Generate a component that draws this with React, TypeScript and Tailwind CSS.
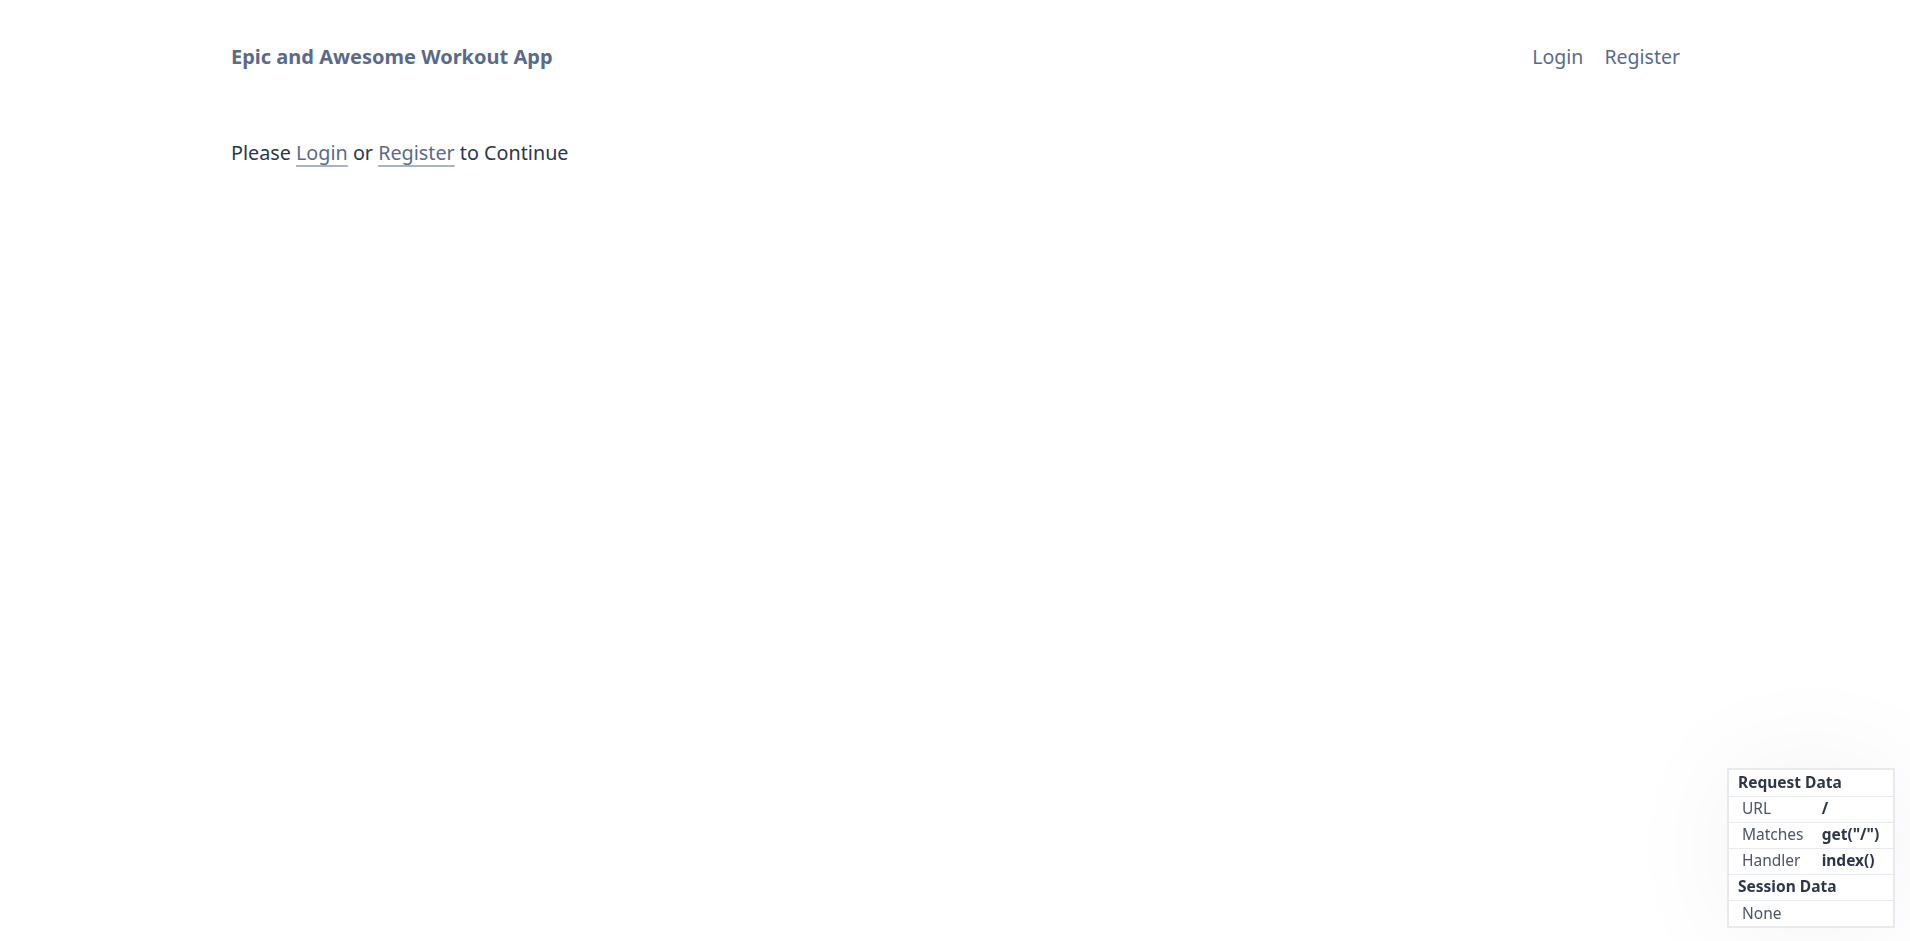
import React from "react";

const rows = [
  { label: "URL", value: "/" },
  { label: "Matches", value: 'get("/")' },
  { label: "Handler", value: "index()" },
];

export default function App() {
  return (
    <div className="min-h-screen bg-white font-['Noto_Sans',sans-serif] text-[#2d3748]">
      <div className="mx-auto w-[1450px] pl-[1px]">
        <header className="flex items-center justify-between pt-[42px]">
          <a className="text-[20px] font-bold text-[#5a6a8b]">Epic and Awesome Workout App</a>
          <nav className="flex gap-[21px] text-[19.5px] text-[#5a6a8b]">
            <a>Login</a>
            <a>Register</a>
          </nav>
        </header>

        <p className="mt-[66px] text-[19.75px]">
          Please{" "}
          <a className="text-[#5a6a8b] underline decoration-[#a9b3c6] decoration-[1.5px] underline-offset-[5px]">Login</a> or{" "}
          <a className="text-[#5a6a8b] underline decoration-[#a9b3c6] decoration-[1.5px] underline-offset-[5px]">Register</a> to
          Continue
        </p>
      </div>

      {/* debug panel */}
      <div className="fixed bottom-[13px] right-[15px] border-2 border-[#e6e9ee] bg-white text-[15.5px] shadow-[0_0_120px_rgba(0,0,0,0.05)]">
        <table className="w-[164px] border-collapse">
          <tbody>
            <tr className="h-[26px] border-b border-[#e6e9ee]">
              <th colSpan={2} className="pl-[9px] pr-[6px] text-left font-bold text-[#2d3748]">Request Data</th>
            </tr>
            {rows.map((r) => (
              <tr key={r.label} className="h-[26px] border-b border-[#e6e9ee]">
                <td className="pl-[13px] pr-[8px] text-[#4a5568]">{r.label}</td>
                <td className="pr-[6px] font-bold text-[#2d3748]">{r.value}</td>
              </tr>
            ))}
            <tr className="h-[26px] border-b border-[#e6e9ee]">
              <th colSpan={2} className="pl-[9px] pr-[6px] text-left font-bold text-[#2d3748]">Session Data</th>
            </tr>
            <tr className="h-[26px]">
              <td colSpan={2} className="pl-[13px] text-[#4a5568]">None</td>
            </tr>
          </tbody>
        </table>
      </div>
    </div>
  );
}
